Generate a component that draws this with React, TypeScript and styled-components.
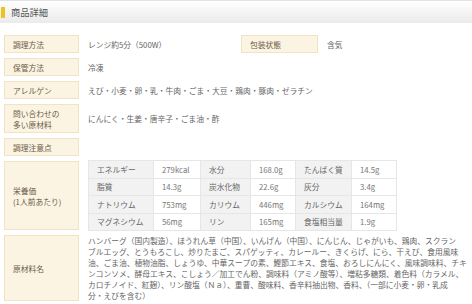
import styled, { createGlobalStyle } from "styled-components";

const GlobalStyle = createGlobalStyle`
    html, body {
        margin: 0;
        padding: 0;
        background: #ffffff;
    }
    body {
        font-family: "Noto Sans CJK JP", "Noto Sans", sans-serif;
        font-size: 7.75px;
        color: #666666;
    }
`

const nutrition = [
    ["エネルギー", "279kcal", "水分", "168.0g", "たんぱく質", "14.5g"],
    ["脂質", "14.3g", "炭水化物", "22.6g", "灰分", "3.4g"],
    ["ナトリウム", "753mg", "カリウム", "446mg", "カルシウム", "164mg"],
    ["マグネシウム", "56mg", "リン", "165mg", "食塩相当量", "1.9g"],
];

const colWidths = [65, 47, 50, 45, 56, 45];

const ingredients = [
    "ハンバーグ（国内製造）、ほうれん草（中国）、いんげん（中国）、にんじん、じゃがいも、鶏肉、スクラン",
    "ブルエッグ、とうもろこし、炒りたまご、スパゲッティ、カレールー、きくらげ、にら、干えび、食用風味",
    "油、ごま油、植物油脂、しょうゆ、中華スープの素、鰹節エキス、食塩、おろしにんにく、風味調味料、チキ",
    "ンコンソメ、酵母エキス、こしょう／加工でん粉、調味料（アミノ酸等）、増粘多糖類、着色料（カラメル、",
    "カロチノイド、紅麹）、リン酸塩（Ｎａ）、重曹、酸味料、香辛料抽出物、香料、（一部に小麦・卵・乳成",
    "分・えびを含む）",
];

const App = () => {
    return (
        <>
            <GlobalStyle />
            <Header>
                <HeaderMark />
                <HeaderTitle>商品詳細</HeaderTitle>
            </Header>

            <SpecList>
                <SpecRow>
                    <SpecLabel>調理方法</SpecLabel>
                    <SpecValue $width="162px">レンジ約5分（500W）</SpecValue>
                    <SpecLabel $width="77px">包装状態</SpecLabel>
                    <SpecValue>含気</SpecValue>
                </SpecRow>
                <SpecRow>
                    <SpecLabel>保管方法</SpecLabel>
                    <SpecValue>冷凍</SpecValue>
                </SpecRow>
                <SpecRow>
                    <SpecLabel>アレルゲン</SpecLabel>
                    <SpecValue>えび・小麦・卵・乳・牛肉・ごま・大豆・鶏肉・豚肉・ゼラチン</SpecValue>
                </SpecRow>
                <SpecRow>
                    <SpecLabel>問い合わせの<br />多い原材料</SpecLabel>
                    <SpecValue>にんにく・生姜・唐辛子・ごま油・酢</SpecValue>
                </SpecRow>
                <SpecRow>
                    <SpecLabel>調理注意点</SpecLabel>
                    <SpecValue />
                </SpecRow>
                <SpecRow>
                    <SpecLabel>栄養価<br />(1人前あたり)</SpecLabel>
                    <SpecValue $flush>
                        <NutritionTable>
                            <colgroup>
                                {colWidths.map((w, i) => (
                                    <col key={i} style={{ width: w }} />
                                ))}
                            </colgroup>
                            <tbody>
                                {nutrition.map((row, r) => (
                                    <tr key={r}>
                                        {row.map((cell, c) => (
                                            <NutritionCell key={c} $head={c % 2 === 0}>{cell}</NutritionCell>
                                        ))}
                                    </tr>
                                ))}
                            </tbody>
                        </NutritionTable>
                    </SpecValue>
                </SpecRow>
                <SpecRow>
                    <SpecLabel>原材料名</SpecLabel>
                    <IngredientText>
                        {ingredients.map((line, i) => (
                            <IngredientLine key={i}>{line}</IngredientLine>
                        ))}
                    </IngredientText>
                </SpecRow>
            </SpecList>
        </>
    )
}

const Header = styled.div`
    display: flex;
    align-items: center;
    height: 22px;
    border-top: 1px solid #e2e2e2;
    background: linear-gradient(to bottom, #ffffff 0%, #f3f3f3 55%, #ebebeb 100%);
`

const HeaderMark = styled.span`
    width: 4px;
    height: 11px;
    margin-left: 1px;
    background: #f1c21b;
`

const HeaderTitle = styled.span`
    margin-left: 6px;
    font-size: 9.25px;
    color: #555555;
    letter-spacing: 0;
`

const SpecList = styled.div`
    display: flex;
    flex-direction: column;
    gap: 5px;
    padding: 12px 0 0 4px;
`

const SpecRow = styled.div`
    display: flex;
    align-items: stretch;
`

const SpecLabel = styled.div<{ $width?: string }>`
    box-sizing: border-box;
    flex: 0 0 ${p => p.$width ?? "75px"};
    display: flex;
    align-items: center;
    min-height: 18px;
    padding: 2.5px 8px;
    line-height: 11px;
    background: #fbf4e3;
    border: 1px solid #f1e4c6;
    color: #6b5b45;
    white-space: nowrap;
`

const SpecValue = styled.div<{ $width?: string; $flush?: boolean }>`
    box-sizing: border-box;
    flex: ${p => p.$width ? `0 0 ${p.$width}` : "1 1 auto"};
    display: flex;
    align-items: center;
    padding: ${p => p.$flush ? "0 0 0 9px" : "1px 0 1px 9px"};
    line-height: 11px;
    color: #666666;
    white-space: nowrap;
`

const NutritionTable = styled.table`
    border-collapse: collapse;
    table-layout: fixed;
    width: 308px;
    margin-top: -1px;
    margin-bottom: -1px;
`

const NutritionCell = styled.td<{ $head: boolean }>`
    height: 17.5px;
    padding: 0 0 0 8px;
    box-sizing: border-box;
    border: 1px solid #e6e6e6;
    background: ${p => p.$head ? "#f2f2f2" : "#ffffff"};
    color: ${p => p.$head ? "#666666" : "#777777"};
    line-height: 11px;
    white-space: nowrap;
    overflow: hidden;
`

const IngredientText = styled.div`
    display: flex;
    flex-direction: column;
    padding: 0 0 0 9px;
    line-height: 11px;
    color: #666666;
`

const IngredientLine = styled.span`
    white-space: nowrap;
`

export default App;
